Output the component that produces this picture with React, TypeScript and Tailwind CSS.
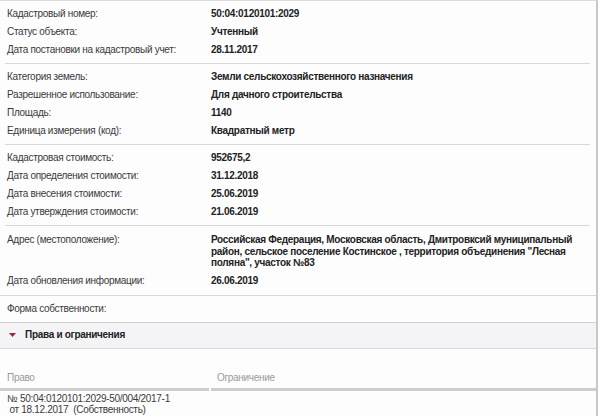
const groups: [string, string][][] = [
  [
    ["Кадастровый номер:", "50:04:0120101:2029"],
    ["Статус объекта:", "Учтенный"],
    ["Дата постановки на кадастровый учет:", "28.11.2017"],
  ],
  [
    ["Категория земель:", "Земли сельскохозяйственного назначения"],
    ["Разрешенное использование:", "Для дачного строительства"],
    ["Площадь:", "1140"],
    ["Единица измерения (код):", "Квадратный метр"],
  ],
  [
    ["Кадастровая стоимость:", "952675,2"],
    ["Дата определения стоимости:", "31.12.2018"],
    ["Дата внесения стоимости:", "25.06.2019"],
    ["Дата утверждения стоимости:", "21.06.2019"],
  ],
];

function Row({ label, value }: { label: string; value: string }) {
  return (
    <div className="flex h-[18px] items-center">
      <div className="w-[211px] shrink-0 pl-[7px] text-[#3a3a3a]">{label}</div>
      <div className="font-bold text-[#222]">{value}</div>
    </div>
  );
}

export default function App() {
  return (
    <div
      className="w-[598px] h-[416px] overflow-hidden bg-[#fefdfe] border-t border-[#dcdcdc] border-r-2 border-r-[#c8c8c8] text-[10px] tracking-[-0.3px] leading-[12px]"
      style={{ fontFamily: '"Liberation Sans", Arial, sans-serif' }}
    >
      {/* блоки с характеристиками */}
      {groups.map((rows, i) => (
        <div key={i}>
          <div className="pt-[4px] pb-[4px]">
            {rows.map(([l, v]) => (
              <Row key={l} label={l} value={v} />
            ))}
          </div>
          <div className="ml-[5px] mr-[6px] h-px bg-[#d8d8d8]" />
        </div>
      ))}

      {/* адрес */}
      <div className="pt-[8px]">
        <div className="flex">
          <div className="w-[211px] shrink-0 pl-[7px] text-[#3a3a3a]">Адрес (местоположение):</div>
          <div className="w-[372px] font-bold text-[#222] leading-[11.5px]">
            Российская Федерация, Московская область, Дмитровксий муниципальный район, сельское
            поселение Костинское , территория объединения "Лесная поляна", участок №83
          </div>
        </div>
        <div className="mt-[3px] pb-[5px]">
          <Row label="Дата обновления информации:" value="26.06.2019" />
        </div>
      </div>
      <div className="h-px bg-[#d8d8d8]" />

      <div className="pt-[4px] pb-[4px]">
        <Row label="Форма собственности:" value="" />
      </div>
      <div className="h-px bg-[#d0d0d0]" />

      {/* права и ограничения */}
      <div className="flex h-[25px] items-center bg-[#f4f4f6] pl-[9px]">
        <svg width="7" height="4" viewBox="0 0 7 4" className="mr-[9px]">
          <path d="M0 0 L7 0 L3.5 4 Z" fill="#a3203e" />
        </svg>
        <span className="font-bold text-[#222]">Права и ограничения</span>
      </div>
      <div className="h-px bg-[#d8d8d8]" />

      <div className="pt-[23px]">
        <div className="flex">
          <div className="w-[209px] mr-[2px]">
            <div className="pl-[7px] pb-[4px] text-[#9a9a9a]">Право</div>
            <div className="h-[3px] bg-[#cdcdcd]" />
          </div>
          <div className="flex-1">
            <div className="pl-[6px] pb-[4px] text-[#9a9a9a]">Ограничение</div>
            <div className="h-[3px] bg-[#cdcdcd]" />
          </div>
        </div>
        <div className="pl-[7px] pt-[2px] text-[#3a3a3a] leading-[11.5px]">
          <div>№ 50:04:0120101:2029-50/004/2017-1</div>
          <div>&nbsp;от 18.12.2017 &nbsp;(Собственность)</div>
        </div>
      </div>
    </div>
  );
}
